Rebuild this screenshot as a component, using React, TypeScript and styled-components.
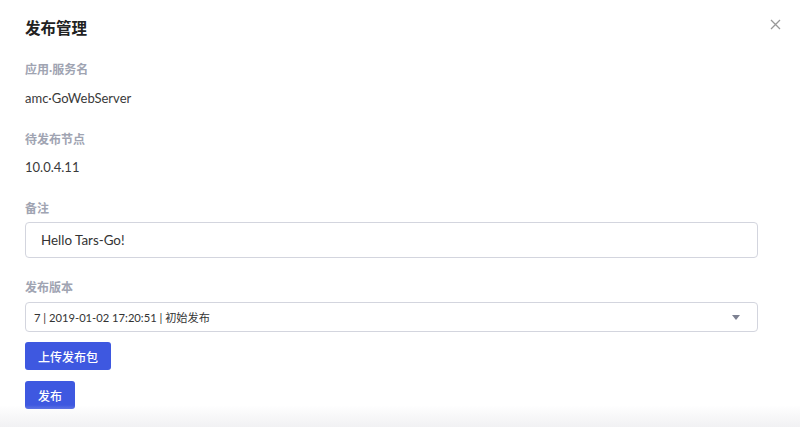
import React from "react";
import styled, { createGlobalStyle } from "styled-components";

const Global = createGlobalStyle`
  html, body { margin: 0; padding: 0; background: #ffffff; }
  body { font-family: Lato, "Noto Sans CJK SC", sans-serif; }
  * { box-sizing: border-box; }
`;

const Modal = styled.div`
  width: 800px;
  height: 427px;
  position: relative;
  background: #ffffff;
  display: flex;
  flex-direction: column;
  overflow: hidden;
`;

const Header = styled.div`
  display: flex;
  align-items: center;
  justify-content: space-between;
  padding: 18px 19px 0 25px;
  height: 38px;
`;

const Title = styled.h2`
  margin: 0;
  font-size: 15.5px;
  line-height: 20px;
  font-weight: 700;
  color: #222;
`;

const Close = styled.button`
  border: none;
  background: none;
  padding: 0;
  width: 12px;
  height: 12px;
  display: flex;
  align-items: center;
  justify-content: center;
  margin-top: -8px;
  cursor: pointer;
`;

const Body = styled.div`
  padding: 23px 42px 0 25px;
  display: flex;
  flex-direction: column;
  align-items: flex-start;
`;

const Field = styled.div<{ $mb: number }>`
  width: 100%;
  display: flex;
  flex-direction: column;
  margin-bottom: ${(p) => p.$mb}px;
`;

const Label = styled.label<{ $mb: number }>`
  font-size: 12px;
  line-height: 18px;
  font-weight: 600;
  color: #a0a4b2;
  margin-bottom: ${(p) => p.$mb}px;
`;

const Value = styled.div`
  font-size: 13px;
  line-height: 20px;
  color: #3a3a3a;
`;

const Input = styled.input`
  width: 100%;
  height: 36px;
  border: 1px solid #d3d5de;
  border-radius: 4px;
  padding: 0 15px;
  font-family: Lato, "Noto Sans CJK SC", sans-serif;
  font-size: 13.4px;
  color: #333;
  outline: none;
`;

const Select = styled.div`
  width: 100%;
  height: 30px;
  border: 1px solid #d3d5de;
  border-radius: 4px;
  padding: 0 8px;
  display: flex;
  align-items: center;
  justify-content: space-between;
  font-size: 11.2px;
  color: #333;
`;

const Arrow = styled.span`
  width: 0;
  height: 0;
  border-left: 4px solid transparent;
  border-right: 4px solid transparent;
  border-top: 5px solid #7d8191;
  margin-right: 9px;
`;

const Button = styled.button<{ $mb?: number }>`
  height: 28px;
  padding: 0 13px;
  border: none;
  border-radius: 3px;
  background: #3e58e0;
  color: #ffffff;
  font-family: Lato, "Noto Sans CJK SC", sans-serif;
  font-size: 12px;
  font-weight: 500;
  margin-bottom: ${(p) => p.$mb ?? 0}px;
  cursor: pointer;
`;

const Fade = styled.div`
  position: absolute;
  left: 0;
  right: 0;
  bottom: 0;
  height: 22px;
  background: linear-gradient(to bottom, rgba(242, 242, 244, 0), #f1f1f3);
  pointer-events: none;
`;

export default function App() {
  return (
    <>
      <Global />
      <Modal>
        <Header>
          <Title>发布管理</Title>
          <Close aria-label="close">
            <svg width="11" height="11" viewBox="0 0 11 11">
              <path d="M1 1L10 10M10 1L1 10" stroke="#999" strokeWidth="1.3" />
            </svg>
          </Close>
        </Header>
        <Body>
          <Field $mb={23}>
            <Label $mb={9}>应用·服务名</Label>
            <Value>amc·GoWebServer</Value>
          </Field>
          <Field $mb={23}>
            <Label $mb={8}>待发布节点</Label>
            <Value>10.0.4.11</Value>
          </Field>
          <Field $mb={21}>
            <Label $mb={4}>备注</Label>
            <Input defaultValue="Hello Tars-Go!" />
          </Field>
          <Field $mb={10}>
            <Label $mb={5}>发布版本</Label>
            <Select>
              <span>7 | 2019-01-02 17:20:51 | 初始发布</span>
              <Arrow />
            </Select>
          </Field>
          <Button $mb={11}>上传发布包</Button>
          <Button>发布</Button>
        </Body>
        <Fade />
      </Modal>
    </>
  );
}
